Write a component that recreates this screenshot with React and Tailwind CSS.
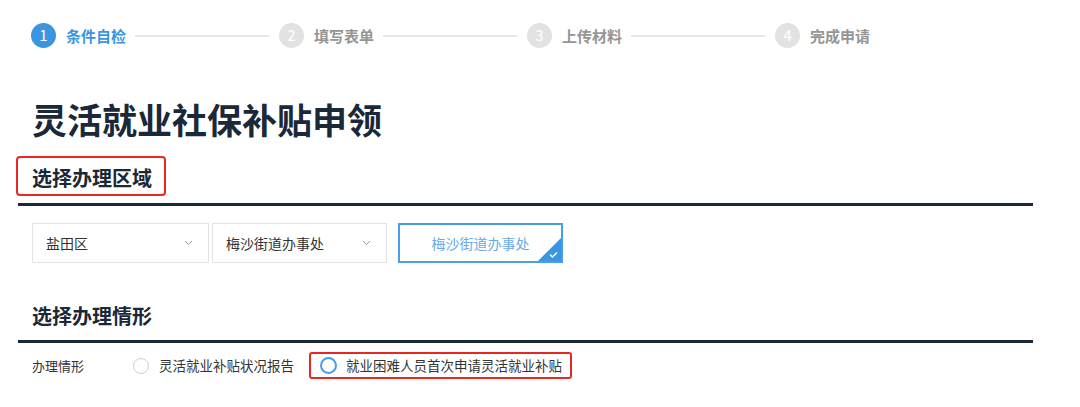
import React from 'react';

const font = { fontFamily: '"Noto Sans CJK SC", "Noto Sans", sans-serif' };

const steps = ['条件自检', '填写表单', '上传材料', '完成申请'];

const Step = ({ index, label, active, last }) => (
  <div className="flex items-center">
    <div
      className={`w-[25px] h-[25px] rounded-full flex items-center justify-center text-[15px] text-white ${
        active ? 'bg-[#3b95e0]' : 'bg-[#e2e2e2]'
      }`}
    >
      {index + 1}
    </div>
    <span
      className={`ml-[10px] text-[15px] leading-none font-bold ${active ? 'text-[#3b95e0]' : 'text-[#959595]'}`}
    >
      {label}
    </span>
    {!last && <div className="ml-[9px] mr-[10px] w-[134px] h-[2px] bg-[#e6e6e6]" />}
  </div>
);

const Chevron = () => (
  <svg width="9" height="6" viewBox="0 0 9 6" className="text-[#9a9a9a]">
    <path d="M1 1l3.5 3.5L8 1" fill="none" stroke="currentColor" strokeWidth="1" />
  </svg>
);

const Select = ({ value, className }) => (
  <div className={`h-[40px] border border-[#e3e3e3] flex items-center justify-between pl-[13px] pr-[15px] ${className}`}>
    <span className="text-[14px] text-[#333]">{value}</span>
    <Chevron />
  </div>
);

export default function App() {
  return (
    <div className="w-[1080px] h-[407px] bg-white overflow-hidden" style={font}>
      {/* stepper */}
      <div className="flex items-center pl-[31px] pt-[23px]">
        {steps.map((s, i) => (
          <Step key={s} index={i} label={s} active={i === 0} last={i === steps.length - 1} />
        ))}
      </div>

      <h1 className="mt-[51px] pl-[32px] text-[35px] leading-[40px] font-bold text-[#1b2838]">
        灵活就业社保补贴申领
      </h1>

      <div className="ml-[18px] w-[1015px]">
        <div className="mt-[17px] ml-[-2px] inline-flex h-[40px] items-center border-2 border-[#ea2620] rounded-[4px] pl-[14px] pr-[12px] pt-[3px]">
          <h2 className="text-[20px] leading-[28px] font-bold text-[#1b2838]">选择办理区域</h2>
        </div>
        <div className="mt-[7px] h-[3px] bg-[#1b2838]" />

        <div className="mt-[17px] ml-[14px] flex items-center">
          <Select value="盐田区" className="w-[177px]" />
          <Select value="梅沙街道办事处" className="w-[175px] ml-[3px]" />
          <div className="relative ml-[11px] w-[165px] h-[40px] border-2 border-[#4a9de8] flex items-center justify-center overflow-hidden">
            <span className="text-[14px] text-[#6aa8e6]">梅沙街道办事处</span>
            <svg width="23" height="23" viewBox="0 0 23 23" className="absolute right-0 bottom-0">
              <polygon points="23,0 23,23 0,23" fill="#3b95e0" />
              <path d="M12 16.5l2.5 2.5 4.5-4.5" fill="none" stroke="#fff" strokeWidth="1.4" />
            </svg>
          </div>
        </div>

        <h2 className="mt-[39px] pl-[14px] text-[20px] leading-[28px] font-bold text-[#1b2838]">选择办理情形</h2>
        <div className="mt-[10px] h-[3px] bg-[#1b2838]" />

        <div className="mt-[9px] h-[27px] flex items-center pl-[14px]">
          <span className="w-[101px] text-[13px] text-[#333]">办理情形</span>
          <div className="w-[16px] h-[16px] rounded-full border border-[#cfcfcf]" />
          <span className="ml-[10px] text-[13.5px] text-[#333]">灵活就业补贴状况报告</span>
          <div className="ml-[15px] h-[27px] flex items-center border-2 border-[#ea2620] rounded-[3px] pl-[9px] pr-[8px]">
            <div className="w-[17px] h-[17px] rounded-full border-2 border-[#4a9de8]" />
            <span className="ml-[9px] text-[13.5px] text-[#333]">就业困难人员首次申请灵活就业补贴</span>
          </div>
        </div>
      </div>
    </div>
  );
}
